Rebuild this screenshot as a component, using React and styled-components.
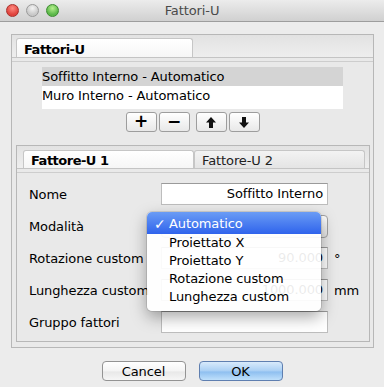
import React from 'react'
import styled, { createGlobalStyle } from 'styled-components'

const GlobalStyle = createGlobalStyle`
html, body {
  margin: 0;
  padding: 0;
  background: #ececec;
}
body {
  font-family: "DejaVu Sans", "Noto Sans", sans-serif;
  font-size: 13px;
  letter-spacing: -0.1px;
  color: #000;
}
`;

function ArrowIcon({ down }) {
  return (
    <svg width="10" height="11" viewBox="0 0 10 11" style={{ transform: down ? 'rotate(180deg)' : 'none' }}>
      <polygon points="5,0 10,5.5 7,5.5 7,11 3,11 3,5.5 0,5.5" fill="#111" />
    </svg>
  )
}

function App() {
  return (
    <>
      <GlobalStyle />
      <Window>
        <TitleBar>
          <Lights>
            <Light $color="red" />
            <Light $color="gray" />
            <Light $color="green" />
          </Lights>
          <Title>Fattori-U</Title>
          <span />
        </TitleBar>

        <Body>
          <TabView>
            <TabStrip>
              <Tab $active $top={3} $left={4}>Fattori-U</Tab>
            </TabStrip>
            <TabRule />
            <List>
              <ListRow $selected>Soffitto Interno - Automatico</ListRow>
              <ListRow>Muro Interno - Automatico</ListRow>
            </List>
            <SegBar>
              <SegGroup>
                <SegButton><Glyph>+</Glyph></SegButton>
                <SegButton><Glyph>−</Glyph></SegButton>
              </SegGroup>
              <SegGroup>
                <SegButton><ArrowIcon /></SegButton>
                <SegButton><ArrowIcon down /></SegButton>
              </SegGroup>
            </SegBar>

            <InnerTabView>
              <TabStrip>
                <Tab $active $top={4} $left={6}>Fattore-U 1</Tab>
                <Tab $top={4}>Fattore-U 2</Tab>
              </TabStrip>
              <TabRule />
              <Form>
                <FormRow>
                  <Label>Nome</Label>
                  <Field>Soffitto Interno</Field>
                </FormRow>
                <FormRow>
                  <Label>Modalità</Label>
                  {/* the open menu covers the popup's own label */}
                  <PopUp />
                </FormRow>
                <FormRow>
                  <Label>Rotazione custom</Label>
                  <Field>90.000</Field>
                  <Unit>°</Unit>
                </FormRow>
                <FormRow>
                  <Label>Lunghezza custom</Label>
                  <Field>1000.000</Field>
                  <Unit>mm</Unit>
                </FormRow>
                <FormRow>
                  <Label>Gruppo fattori</Label>
                  <Field />
                </FormRow>
              </Form>
            </InnerTabView>
          </TabView>

          <Footer>
            <PushButton type="button">Cancel</PushButton>
            <PushButton type="button" $primary>OK</PushButton>
          </Footer>
        </Body>

        <Menu>
          <MenuItem $selected><Check>✓</Check>Automatico</MenuItem>
          <MenuItem>Proiettato X</MenuItem>
          <MenuItem>Proiettato Y</MenuItem>
          <MenuItem>Rotazione custom</MenuItem>
          <MenuItem>Lunghezza custom</MenuItem>
        </Menu>
      </Window>
    </>
  )
}

const lightColors = {
  red: ['#ff8a80', '#e0443e', '#a8302b'],
  gray: ['#f4f4f4', '#c9c9c9', '#9a9a9a'],
  green: ['#b6f08d', '#5cb84a', '#3b8a2f'],
};

const Window = styled.div`
position: relative;
width: 384px;
height: 387px;
background: #ececec;
overflow: hidden;
`;
const TitleBar = styled.div`
height: 21px;
display: grid;
grid-template-columns: 1fr auto 1fr;
align-items: center;
background: linear-gradient(#ececec, #d0d0d0);
border-bottom: 1px solid #9d9d9d;
`;
const Lights = styled.div`
display: flex;
gap: 7px;
padding-left: 6px;
`;
const Light = styled.span`
width: 13px;
height: 13px;
border-radius: 50%;
box-sizing: border-box;
border: 1px solid ${p => lightColors[p.$color][2]};
background: radial-gradient(circle at 50% 30%, ${p => lightColors[p.$color][0]} 0%, ${p => lightColors[p.$color][1]} 65%);
`;
const Title = styled.div`
color: #4a4a4a;
font-size: 13px;
`;
const Body = styled.div`
padding: 12px 10px 0 11px;
`;
const TabView = styled.div`
display: flex;
flex-direction: column;
height: 314px;
box-sizing: border-box;
border: 1px solid #b7b7b7;
background: #e9e9e9;
`;
const InnerTabView = styled(TabView)`
height: 197px;
margin: 13px 3px 0 4px;
`;
const TabStrip = styled.div`
display: flex;
align-items: flex-end;
height: 22px;
background: linear-gradient(#e2e2e2, #eeeeee);
border-bottom: 1px solid #c4c4c4;
`;
const Tab = styled.div`
box-sizing: border-box;
width: ${p => (p.$left === 4 ? 177 : 171)}px;
height: ${p => 22 - p.$top}px;
margin-left: ${p => p.$left || 0}px;
padding: 2px 0 0 7px;
display: flex;
align-items: center;
border: 1px solid #c6c6c6;
border-bottom: none;
border-radius: 3px 3px 0 0;
background: ${p => (p.$active ? 'linear-gradient(#ffffff, #f6f6f6)' : 'linear-gradient(#f3f3f3, #e4e4e4)')};
font-weight: ${p => (p.$active ? 'bold' : 'normal')};
letter-spacing: ${p => (p.$active ? '-0.5px' : '-0.1px')};
color: ${p => (p.$active ? '#000' : '#222')};
`;
const TabRule = styled.div`
margin-top: 3px;
border-top: 1px solid #cdcdcd;
`;
const List = styled.div`
margin: 5px 0 0 30px;
width: 301px;
height: 42px;
background: #fff;
`;
const ListRow = styled.div`
height: 19px;
line-height: 19px;
background: ${p => (p.$selected ? '#d4d4d4' : 'transparent')};
`;
const SegBar = styled.div`
display: flex;
justify-content: center;
gap: 6px;
margin-top: 3px;
`;
const SegGroup = styled.div`
display: flex;
gap: 2px;
`;
const SegButton = styled.div`
width: 31px;
height: 20px;
box-sizing: border-box;
display: flex;
align-items: center;
justify-content: center;
border: 1px solid #9d9d9d;
border-radius: 3px;
background: linear-gradient(#ffffff, #e8e8e8);
`;
const Glyph = styled.span`
font-size: 17px;
font-weight: bold;
line-height: 1;
margin-top: -1px;
`;
const Form = styled.div`
display: flex;
flex-direction: column;
gap: 8px;
padding: 9px 0 0 12px;
`;
const FormRow = styled.div`
display: flex;
align-items: center;
height: 24px;
`;
const Label = styled.div`
width: 132px;
`;
const Field = styled.div`
box-sizing: border-box;
width: 167px;
height: 22px;
line-height: 20px;
padding-right: 4px;
text-align: right;
background: #fff;
border: 1px solid #bdbdbd;
border-top-color: #9a9a9a;
`;
const PopUp = styled.div`
box-sizing: border-box;
width: 167px;
height: 23px;
border: 1px solid #a3a3a3;
border-radius: 4px;
background: linear-gradient(#ffffff, #e6e6e6);
`;
const Unit = styled.span`
margin-left: 6px;
`;
const Menu = styled.div`
position: absolute;
left: 147px;
top: 212px;
width: 174px;
padding-bottom: 5px;
border-radius: 5px;
overflow: hidden;
background: rgba(255, 255, 255, 0.92);
box-shadow: 0 6px 16px rgba(0, 0, 0, 0.35), 0 0 0 1px rgba(0, 0, 0, 0.1);
`;
const MenuItem = styled.div`
position: relative;
box-sizing: border-box;
height: ${p => (p.$selected ? 22 : 18)}px;
line-height: 18px;
padding: ${p => (p.$selected ? '3px' : '0')} 0 0 22px;
color: ${p => (p.$selected ? '#fff' : '#000')};
background: ${p => (p.$selected ? 'linear-gradient(#6a9cf5, #2f63ec)' : 'transparent')};
`;
const Check = styled.span`
position: absolute;
left: 7px;
top: 3px;
font-weight: bold;
font-size: 14px;
`;
const Footer = styled.div`
display: flex;
justify-content: center;
gap: 13px;
margin-top: 13px;
padding-right: 1px;
`;
const PushButton = styled.button`
width: 84px;
height: 20px;
padding: 0;
font-family: inherit;
font-size: 13px;
letter-spacing: -0.1px;
color: #000;
border-radius: 4px;
border: 1px solid ${p => (p.$primary ? '#5f7fb0' : '#939393')};
background: ${p => (p.$primary
    ? 'linear-gradient(#d8eafb 0%, #a9cff4 50%, #8ebff0 55%, #bfe0fb 100%)'
    : 'linear-gradient(#ffffff 0%, #f4f4f4 50%, #e8e8e8 55%, #f6f6f6 100%)')};
`;

export default App
